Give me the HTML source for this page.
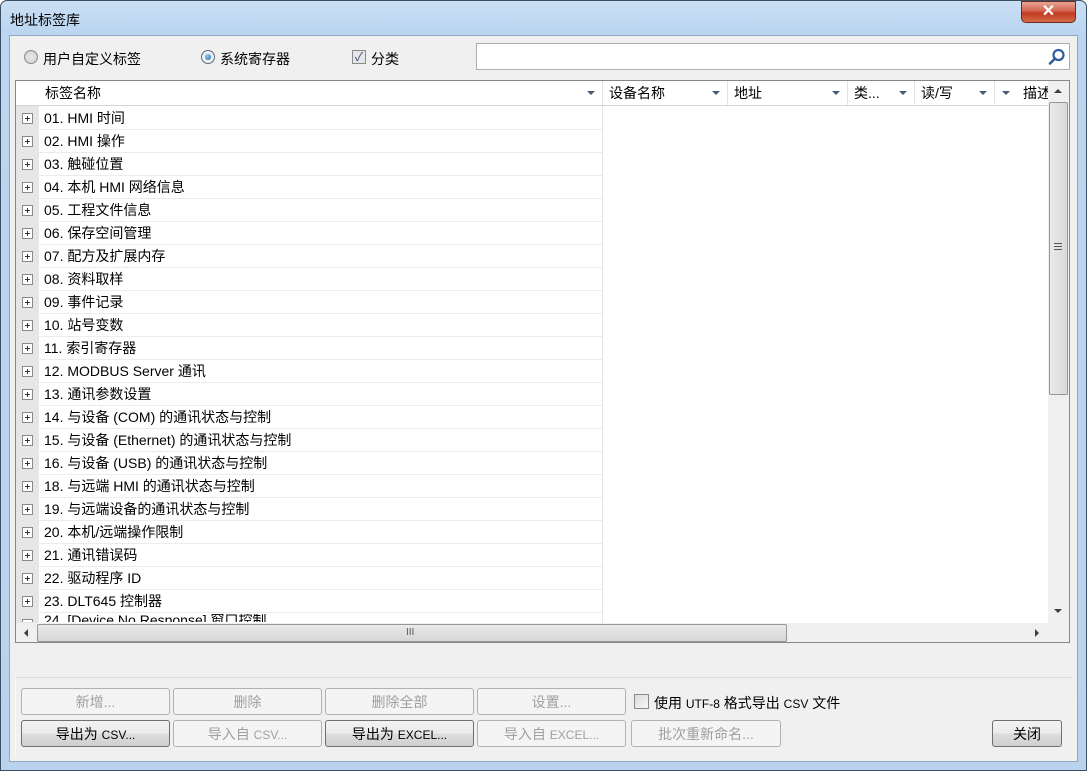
<!DOCTYPE html>
<html><head><meta charset="utf-8"><style>
*{box-sizing:border-box;margin:0;padding:0}
body{width:1087px;height:771px;overflow:hidden;background:#fff;font-family:"Liberation Sans","Noto Sans CJK SC",sans-serif;font-size:14px;color:#000;position:relative}
.a{position:absolute}
#frame{left:0;top:0;width:1087px;height:771px;border:1px solid #3d4f62;border-radius:7px 7px 0 0;background:linear-gradient(#c9dff4,#bcd6f1 30px,#b9d3ee);}
#client{left:9px;top:35px;width:1069px;height:727px;background:#f0f0f0;border:1px solid #8fa6bf}
.btn{position:absolute;height:27px;border:1px solid #adb2b5;border-radius:3px;background:#f4f4f4;color:#a0a0a0;text-align:center;line-height:26px;font-size:14px}
.btn.en{border-color:#707070;background:linear-gradient(#f2f2f2,#ebebeb 50%,#dddddd 51%,#cfcfcf);color:#000}
.row{position:absolute;left:38px;width:564px;height:23px;border-bottom:1px solid #ececec;line-height:23px;padding-left:6px;font-size:14px;white-space:nowrap}
.plus{position:absolute;left:22px;width:11px;height:11px;border:1px solid #8a8a8a;background:#fff}
.plus:before{content:"";position:absolute;left:2px;top:4px;width:5px;height:1px;background:#333}
.plus:after{content:"";position:absolute;left:4px;top:2px;width:1px;height:5px;background:#333}
.hd{position:absolute;top:0;height:24px;line-height:25px;font-size:14px;border-right:1px solid #e3e3e3;padding-left:6px;white-space:nowrap;overflow:hidden}
.dd{position:absolute;top:10px;width:0;height:0;border-left:4px solid transparent;border-right:4px solid transparent;border-top:4px solid #4a5a70}
</style></head><body>
<div id="frame" class="a"></div>
<div class="a" style="left:10px;top:10px;font-size:14px">地址标签库</div>
<div class="a" style="left:1021px;top:1px;width:55px;height:22px;border:1px solid #6b2a22;border-radius:0 0 5px 5px;background:linear-gradient(#e8a597,#d2634f 45%,#c23a22 55%,#d46b47);color:#fff;text-align:center;font-weight:bold;font-size:16px;line-height:20px">✕</div>
<div id="client" class="a"></div>

<div class="a" style="left:24px;top:50px;width:14px;height:14px;border-radius:50%;border:1px solid #8a8a8a;background:radial-gradient(#e8e8e8,#d0d0d0)"></div>
<div class="a" style="left:43px;top:49px">用户自定义标签</div>
<div class="a" style="left:201px;top:50px;width:14px;height:14px;border-radius:50%;border:1px solid #5a6a80;background:#f0f0f0"><div class="a" style="left:3px;top:3px;width:6px;height:6px;border-radius:50%;background:radial-gradient(circle at 40% 35%,#8fd0ff,#1c5c9c)"></div></div>
<div class="a" style="left:220px;top:49px">系统寄存器</div>
<div class="a" style="left:352px;top:50px;width:14px;height:14px;border:1px solid #8a8a8a;background:#e6e6e6;font-size:12px;line-height:12px;text-align:center;color:#2d4a7a">✓</div>
<div class="a" style="left:371px;top:49px">分类</div>

<div class="a" style="left:476px;top:43px;width:594px;height:27px;border:1px solid #abadb3;background:#fff"></div>
<svg class="a" style="left:1047px;top:47px" width="20" height="20" viewBox="0 0 20 20"><circle cx="11.5" cy="8" r="5" fill="none" stroke="#2e5f9a" stroke-width="2.2"/><line x1="8" y1="11.5" x2="3" y2="16.5" stroke="#2e5f9a" stroke-width="2.6" stroke-linecap="round"/></svg>

<div class="a" style="left:15px;top:80px;width:1055px;height:563px;border:1px solid #828790;background:#fff;overflow:hidden">
 <div class="a" style="left:0;top:0;width:1055px;height:25px;background:#fff;border-bottom:1px solid #d5d5d5"></div>
 <div class="hd" style="left:0;width:587px;padding-left:29px">标签名称</div><div class="dd" style="left:571px"></div>
 <div class="hd" style="left:587px;width:125px">设备名称</div><div class="dd" style="left:696px"></div>
 <div class="hd" style="left:712px;width:120px">地址</div><div class="dd" style="left:816px"></div>
 <div class="hd" style="left:832px;width:67px">类...</div><div class="dd" style="left:883px"></div>
 <div class="hd" style="left:899px;width:80px">读/写</div><div class="dd" style="left:963px"></div>
 <div class="dd" style="left:986px"></div>
 <div class="hd" style="left:1001px;width:31px;border:none">描述</div>
 <div class="a" style="left:0;top:25px;width:23px;height:518px;background:#e6e6e6"></div>
 <div class="a" style="left:586px;top:25px;width:1px;height:518px;background:#e6e6e6"></div>
 <div class="a" style="left:1032px;top:0;width:21px;height:542px;background:#f0f0f0"></div>
 <div class="a" style="left:1038px;top:8px;border-left:4px solid transparent;border-right:4px solid transparent;border-bottom:4px solid #404040"></div>
 <div class="a" style="left:1033px;top:21px;width:19px;height:293px;border:1px solid #969696;border-radius:2px;background:linear-gradient(90deg,#eaeaea,#d8d8d8)"></div>
 <div class="a" style="left:1038px;top:162px;width:8px;height:7px;border-top:1px solid #555;border-bottom:1px solid #555"><div style="margin-top:2px;height:1px;background:#555"></div></div>
 <div class="a" style="left:1038px;top:528px;border-left:4px solid transparent;border-right:4px solid transparent;border-top:4px solid #404040"></div>
 <div class="a" style="left:0;top:542px;width:1053px;height:20px;background:#f0f0f0"></div>
 <div class="a" style="left:8px;top:548px;border-top:4px solid transparent;border-bottom:4px solid transparent;border-right:4px solid #404040"></div>
 <div class="a" style="left:21px;top:543px;width:750px;height:18px;border:1px solid #969696;border-radius:2px;background:linear-gradient(#eaeaea,#d6d6d6)"></div>
 <div class="a" style="left:390px;top:546px;font-size:10px;color:#555">III</div>
 <div class="a" style="left:1019px;top:548px;border-top:4px solid transparent;border-bottom:4px solid transparent;border-left:4px solid #404040"></div>
</div>

<div id="rows">
<div class="plus a" style="top:113px"></div><div class="row" style="top:107px">01. HMI 时间</div>
<div class="plus a" style="top:136px"></div><div class="row" style="top:130px">02. HMI 操作</div>
<div class="plus a" style="top:159px"></div><div class="row" style="top:153px">03. 触碰位置</div>
<div class="plus a" style="top:182px"></div><div class="row" style="top:176px">04. 本机 HMI 网络信息</div>
<div class="plus a" style="top:205px"></div><div class="row" style="top:199px">05. 工程文件信息</div>
<div class="plus a" style="top:228px"></div><div class="row" style="top:222px">06. 保存空间管理</div>
<div class="plus a" style="top:251px"></div><div class="row" style="top:245px">07. 配方及扩展内存</div>
<div class="plus a" style="top:274px"></div><div class="row" style="top:268px">08. 资料取样</div>
<div class="plus a" style="top:297px"></div><div class="row" style="top:291px">09. 事件记录</div>
<div class="plus a" style="top:320px"></div><div class="row" style="top:314px">10. 站号变数</div>
<div class="plus a" style="top:343px"></div><div class="row" style="top:337px">11. 索引寄存器</div>
<div class="plus a" style="top:366px"></div><div class="row" style="top:360px">12. MODBUS Server 通讯</div>
<div class="plus a" style="top:389px"></div><div class="row" style="top:383px">13. 通讯参数设置</div>
<div class="plus a" style="top:412px"></div><div class="row" style="top:406px">14. 与设备 (COM) 的通讯状态与控制</div>
<div class="plus a" style="top:435px"></div><div class="row" style="top:429px">15. 与设备 (Ethernet) 的通讯状态与控制</div>
<div class="plus a" style="top:458px"></div><div class="row" style="top:452px">16. 与设备 (USB) 的通讯状态与控制</div>
<div class="plus a" style="top:481px"></div><div class="row" style="top:475px">18. 与远端 HMI 的通讯状态与控制</div>
<div class="plus a" style="top:504px"></div><div class="row" style="top:498px">19. 与远端设备的通讯状态与控制</div>
<div class="plus a" style="top:527px"></div><div class="row" style="top:521px">20. 本机/远端操作限制</div>
<div class="plus a" style="top:550px"></div><div class="row" style="top:544px">21. 通讯错误码</div>
<div class="plus a" style="top:573px"></div><div class="row" style="top:567px">22. 驱动程序 ID</div>
<div class="plus a" style="top:596px"></div><div class="row" style="top:590px">23. DLT645 控制器</div>
<div class="a" style="left:15px;top:614px;width:587px;height:8px;overflow:hidden"><div class="plus a" style="top:5px;left:7px"></div><div class="a" style="left:29px;top:-4px;white-space:nowrap">24. [Device No Response] 窗口控制</div></div>
</div>

<div class="a" style="left:15px;top:677px;width:1057px;height:78px;border-top:1px solid #dcdcdc;border-left:1px solid #fafafa"></div>
<div class="btn" style="left:21px;top:688px;width:149px">新增...</div>
<div class="btn" style="left:173px;top:688px;width:149px">删除</div>
<div class="btn" style="left:325px;top:688px;width:149px">删除全部</div>
<div class="btn" style="left:477px;top:688px;width:149px">设置...</div>
<div class="a" style="left:634px;top:694px;width:15px;height:15px;border:1px solid #8a8a8a;background:linear-gradient(135deg,#dcdcdc,#f6f6f6)"></div>
<div class="a" style="left:654px;top:693px">使用 <span style="font-size:12px">UTF-8</span> 格式导出 <span style="font-size:12px">CSV</span> 文件</div>
<div class="btn en" style="left:21px;top:720px;width:149px">导出为 <span style="font-size:12px">CSV...</span></div>
<div class="btn" style="left:173px;top:720px;width:149px">导入自 <span style="font-size:12px">CSV...</span></div>
<div class="btn en" style="left:325px;top:720px;width:149px">导出为 <span style="font-size:12px">EXCEL...</span></div>
<div class="btn" style="left:477px;top:720px;width:149px">导入自 <span style="font-size:12px">EXCEL...</span></div>
<div class="btn" style="left:631px;top:720px;width:150px">批次重新命名...</div>
<div class="btn en" style="left:992px;top:720px;width:70px">关闭</div>
</body></html>
